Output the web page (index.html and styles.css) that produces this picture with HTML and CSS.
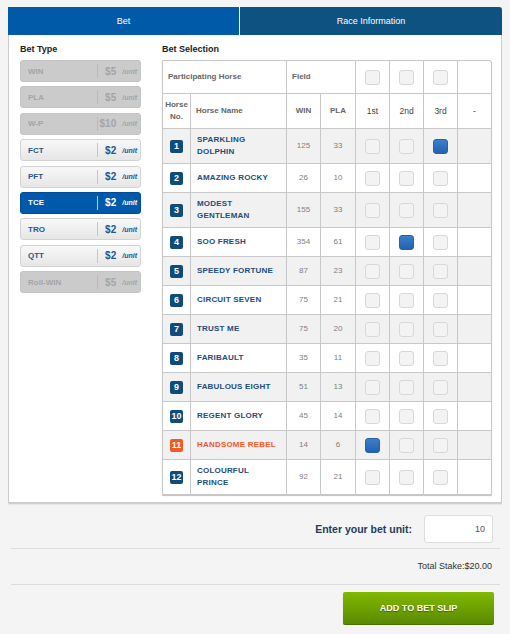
FILE: index.html
```html
<!DOCTYPE html>
<html lang="en">
<head>
  <meta charset="UTF-8" />
  <title>Bet - Race Betting</title>
  <link rel="stylesheet" href="styles.css">
</head>
<body>

  <div class="panel">
    <div class="tabs">
      <div class="tab active">Bet</div>
      <div class="tab">Race Information</div>
    </div>

    <div class="panel-body">
      <!-- left: bet type list -->
      <div class="bet-types">
        <h3>Bet Type</h3>
        <ul class="type-list">
          <li class="type disabled"><span class="type-name">WIN</span><span class="type-price"><b>$5</b><i>/unit</i></span></li>
          <li class="type disabled"><span class="type-name">PLA</span><span class="type-price"><b>$5</b><i>/unit</i></span></li>
          <li class="type disabled"><span class="type-name">W-P</span><span class="type-price"><b>$10</b><i>/unit</i></span></li>
          <li class="type"><span class="type-name">FCT</span><span class="type-price"><b>$2</b><i>/unit</i></span></li>
          <li class="type"><span class="type-name">PFT</span><span class="type-price"><b>$2</b><i>/unit</i></span></li>
          <li class="type active"><span class="type-name">TCE</span><span class="type-price"><b>$2</b><i>/unit</i></span></li>
          <li class="type"><span class="type-name">TRO</span><span class="type-price"><b>$2</b><i>/unit</i></span></li>
          <li class="type"><span class="type-name">QTT</span><span class="type-price"><b>$2</b><i>/unit</i></span></li>
          <li class="type disabled"><span class="type-name">Roll-WIN</span><span class="type-price"><b>$5</b><i>/unit</i></span></li>
        </ul>
      </div>

      <!-- right: horse selection table -->
      <div class="bet-selection">
        <h3>Bet Selection</h3>
        <div class="sel-wrap">
          <table class="sel">
            <colgroup>
              <col style="width:28px"><col style="width:96px"><col style="width:34px"><col style="width:35px">
              <col style="width:34px"><col style="width:34px"><col style="width:34px"><col style="width:33px">
            </colgroup>
            <thead>
              <tr class="field-row">
                <th colspan="2" class="left">Participating Horse</th>
                <th colspan="2" class="left">Field</th>
                <th><span class="box"></span></th>
                <th><span class="box"></span></th>
                <th><span class="box"></span></th>
                <th></th>
              </tr>
              <tr class="head-row">
                <th>Horse<br>No.</th>
                <th class="left">Horse Name</th>
                <th>WIN</th>
                <th>PLA</th>
                <th class="ord">1st</th>
                <th class="ord">2nd</th>
                <th class="ord">3rd</th>
                <th class="ord">-</th>
              </tr>
            </thead>
            <tbody>
              <tr><td><span class="no">1</span></td><td class="name">SPARKLING DOLPHIN</td><td>125</td><td>33</td><td><span class="box"></span></td><td><span class="box"></span></td><td><span class="box on"></span></td><td></td></tr>
              <tr><td><span class="no">2</span></td><td class="name">AMAZING ROCKY</td><td>26</td><td>10</td><td><span class="box"></span></td><td><span class="box"></span></td><td><span class="box"></span></td><td></td></tr>
              <tr><td><span class="no">3</span></td><td class="name">MODEST GENTLEMAN</td><td>155</td><td>33</td><td><span class="box"></span></td><td><span class="box"></span></td><td><span class="box"></span></td><td></td></tr>
              <tr><td><span class="no">4</span></td><td class="name">SOO FRESH</td><td>354</td><td>61</td><td><span class="box"></span></td><td><span class="box on"></span></td><td><span class="box"></span></td><td></td></tr>
              <tr><td><span class="no">5</span></td><td class="name">SPEEDY FORTUNE</td><td>87</td><td>23</td><td><span class="box"></span></td><td><span class="box"></span></td><td><span class="box"></span></td><td></td></tr>
              <tr><td><span class="no">6</span></td><td class="name">CIRCUIT SEVEN</td><td>75</td><td>21</td><td><span class="box"></span></td><td><span class="box"></span></td><td><span class="box"></span></td><td></td></tr>
              <tr><td><span class="no">7</span></td><td class="name">TRUST ME</td><td>75</td><td>20</td><td><span class="box"></span></td><td><span class="box"></span></td><td><span class="box"></span></td><td></td></tr>
              <tr><td><span class="no">8</span></td><td class="name">FARIBAULT</td><td>35</td><td>11</td><td><span class="box"></span></td><td><span class="box"></span></td><td><span class="box"></span></td><td></td></tr>
              <tr><td><span class="no">9</span></td><td class="name">FABULOUS EIGHT</td><td>51</td><td>13</td><td><span class="box"></span></td><td><span class="box"></span></td><td><span class="box"></span></td><td></td></tr>
              <tr><td><span class="no">10</span></td><td class="name">REGENT GLORY</td><td>45</td><td>14</td><td><span class="box"></span></td><td><span class="box"></span></td><td><span class="box"></span></td><td></td></tr>
              <tr class="fav"><td><span class="no">11</span></td><td class="name">HANDSOME REBEL</td><td>14</td><td>6</td><td><span class="box on"></span></td><td><span class="box"></span></td><td><span class="box"></span></td><td></td></tr>
              <tr><td><span class="no">12</span></td><td class="name">COLOURFUL PRINCE</td><td>92</td><td>21</td><td><span class="box"></span></td><td><span class="box"></span></td><td><span class="box"></span></td><td></td></tr>
            </tbody>
          </table>
        </div>
      </div>
    </div>
  </div>

  <div class="bet-footer">
    <div class="unit-row">
      <label for="unit">Enter your bet unit:</label>
      <input type="text" id="unit" value="10">
    </div>
    <div class="stake-row">Total Stake:$20.00</div>
    <div class="actions">
      <button type="button">ADD TO BET SLIP</button>
    </div>
  </div>

</body>
</html>
```

FILE: styles.css
```css
:root{
  --blue:#005aa8;
  --navy:#0d5281;
  --line:#c8c8c8;
  --type-text:#24578b;
  --horse:#1d4d7b;
  --orange:#f15a24;
}
*{box-sizing:border-box;margin:0;padding:0}
body{
  margin:7px 8px;
  background:#f4f4f4;
  font-family:"Liberation Sans",Arial,Helvetica,sans-serif;
  color:#333;
}

/* ---------- panel + tabs ---------- */
.panel{
  background:#fff;
  border:1px solid #cbcbcb;
  border-top:none;
  border-radius:0 3px 0 0;
  box-shadow:0 1px 2px rgba(0,0,0,.2);
}
.tabs{display:flex;height:28px;margin:0 -1px}
.tab{
  display:flex;
  align-items:center;
  justify-content:center;
  color:#fff;
  font-size:9px;
  background:var(--navy);
}
.tab.active{width:232px;background:var(--blue);border-right:1px solid #fff}
.tab:last-child{flex:1;border-radius:0 3px 0 0}

.panel-body{display:flex;gap:21px;padding:8px 9px 7px 11px}
h3{font-size:9px;line-height:12px;color:#222;margin-bottom:5px}

/* ---------- bet type list ---------- */
.bet-types{width:121px}
.type-list{list-style:none}
.type{
  display:flex;
  align-items:center;
  height:22px;
  margin-bottom:4.4px;
  border:1px solid #d3d3d3;
  border-radius:3px;
  background:linear-gradient(#f8f8f8,#e6e6e6);
  color:var(--type-text);
}
.type-name{flex:1;padding-left:7px;font-size:8px;font-weight:700}
.type-price{
  width:43px;
  height:14px;
  display:flex;
  align-items:center;
  justify-content:flex-end;
  padding-right:3px;
  border-left:1px solid #c6c6c6;
}
.type-price b{font-size:10px}
.type-price i{font-size:7px;font-weight:700;margin-left:6px}
.type.disabled{background:#cbcbcb;border-color:#c4c4c4;color:#a5a5a5}
.type.disabled .type-price{border-color:#bababa}
.type.active{background:#0059ab;border-color:#004d95;color:#fff}
.type.active .type-price{border-color:#b8cde4}

/* ---------- selection table ---------- */
.bet-selection{width:330px}
.sel-wrap{
  border:1px solid var(--line);
  border-radius:0 3px 0 0;
  box-shadow:0 1px 1px rgba(0,0,0,.25);
  overflow:hidden;
}
.sel{width:100%;border-collapse:separate;border-spacing:0;table-layout:fixed}
.sel th,.sel td{
  border-right:1px solid var(--line);
  border-bottom:1px solid var(--line);
  padding:5px 2px;
  text-align:center;
  vertical-align:middle;
  line-height:12px;
}
.sel th:last-child,.sel td:last-child{border-right:none}
.sel tbody tr:last-child td{border-bottom:none}
.sel th{font-size:8px;font-weight:700;color:#666}
.sel th.left{text-align:left;padding-left:5px}
.sel th.ord{font-weight:400;color:#444;font-size:8.5px}
.field-row{height:33px}
.sel tbody tr{height:29px}
.sel tbody tr:nth-child(odd){background:#f1f1f1}
.sel td{font-size:8px;color:#808080}
.sel td.name{
  text-align:left;
  padding:5px 8px 5px 6px;
  font-weight:700;
  letter-spacing:.2px;
  color:var(--horse);
}
.no{
  display:inline-block;
  min-width:13px;
  height:13px;
  padding:0 1px;
  border-radius:2px;
  background:#0f4c7c;
  color:#fff;
  font-size:9px;
  font-weight:700;
  line-height:13px;
  vertical-align:middle;
}
.fav .no{background:var(--orange)}
.fav td.name{color:var(--orange)}
.box{
  display:inline-block;
  width:15px;
  height:15px;
  border:1px solid #d8d8d8;
  border-radius:3px;
  background:#f3f3f3;
  vertical-align:middle;
}
.box.on{background:linear-gradient(#3a7fcc,#2462ad);border-color:#2a5fa3}

/* ---------- footer ---------- */
.bet-footer{padding:0 2px 0 3px}
.unit-row{
  display:flex;
  justify-content:flex-end;
  align-items:center;
  gap:12px;
  padding:12px 7px 5px 0;
  border-bottom:1px solid #dcdcdc;
}
.unit-row label{font-size:10.5px;font-weight:700;color:#1e3b5e}
.unit-row input{
  width:69px;
  height:28px;
  border:1px solid #dddddd;
  border-radius:3px;
  background:#fff;
  text-align:right;
  padding:0 7px;
  font-family:inherit;
  font-size:9px;
  color:#555;
}
.stake-row{
  height:36px;
  line-height:35px;
  text-align:right;
  padding-right:8px;
  border-bottom:1px solid #dcdcdc;
  font-size:9px;
  color:#333;
}
.actions{display:flex;justify-content:flex-end;padding:7px 6px 0 0}
button{
  width:151px;
  height:33px;
  border:none;
  border-bottom:1px solid #4b7000;
  border-radius:2px;
  background:linear-gradient(#81b900,#5a8900);
  color:#fff;
  font-family:inherit;
  font-size:9px;
  font-weight:700;
  text-shadow:0 1px 1px rgba(0,0,0,.35);
  box-shadow:0 1px 1px rgba(0,0,0,.2);
  cursor:pointer;
}
```
